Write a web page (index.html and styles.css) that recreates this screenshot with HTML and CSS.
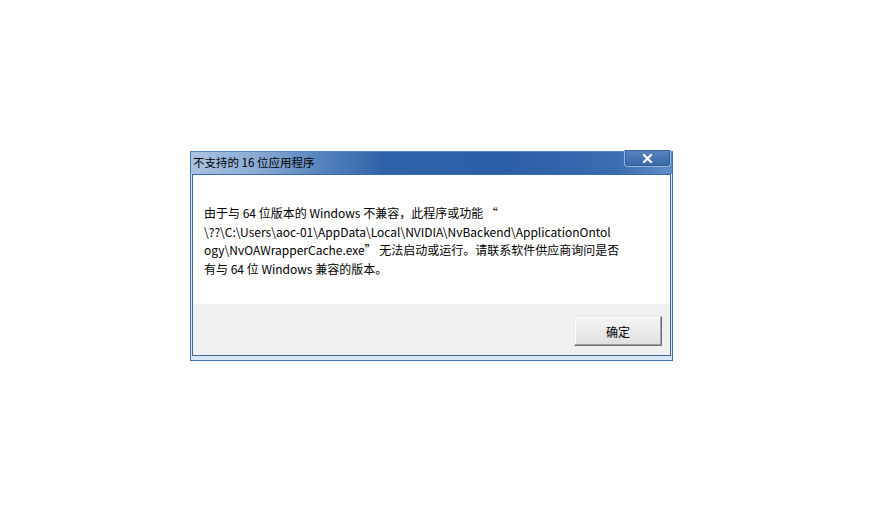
FILE: index.html
```html
<!DOCTYPE html>
<html lang="zh-CN">
<head>
<meta charset="utf-8">
<title>不支持的 16 位应用程序</title>
<link rel="stylesheet" href="styles.css">
</head>
<body>
<div class="window">
  <div class="titlebar">
    <span class="title">不支持的 16 位应用程序</span>
    <div class="close"><svg width="11" height="9" viewBox="0 0 11 9"><path d="M2 1 L9 8 M9 1 L2 8" stroke="#fff" stroke-width="2.2" stroke-linecap="square"/></svg></div>
  </div>
  <div class="client">
    <div class="message">
      <p>由于与 64 位版本的 Windows 不兼容，此程序或功能 “<br>\??\C:\Users\aoc-01\AppData\Local\NVIDIA\NvBackend\ApplicationOntol<br>ogy\NvOAWrapperCache.exe” 无法启动或运行。请联系软件供应商询问是否<br>有与 64 位 Windows 兼容的版本。</p>
    </div>
    <div class="footer">
      <button class="btn">确定</button>
    </div>
  </div>
</div>
</body>
</html>
```
FILE: styles.css
```css
html, body {
  margin: 0;
  padding: 0;
  background: #ffffff;
}
body {
  font-family: "Noto Sans CJK SC", "Noto Sans", sans-serif;
  width: 891px;
  height: 527px;
  overflow: hidden;
}
.window {
  position: relative;
  margin: 151px 0 0 190px;
  width: 483px;
  box-sizing: border-box;
  border: 1px solid #3f76b2;
  border-top-color: #5a86bd;
  background:
    linear-gradient(90deg, #a9c3e2 0%, #8aaad3 14%, #5a86c0 26%, #2f63a9 40%, #2a5ea6 65%, #3a6cb0 88%, #5f8cc6 100%) top left / 100% 22px no-repeat,
    #d9e6f3;
  padding: 0 1px 4px 1px;
}
.titlebar {
  height: 22px;
  display: flex;
  align-items: center;
  padding-left: 1px;
}
.title {
  font-size: 11.5px;
  color: #000;
  line-height: 14px;
  margin-top: -2px;
}
.close {
  position: absolute;
  right: 1px;
  top: -2px;
  width: 47px;
  height: 17px;
  box-sizing: border-box;
  border: 1px solid #9ab6d8;
  border-top: none;
  border-radius: 0 0 4px 4px;
  background: linear-gradient(180deg, #5c86bf 0%, #4775b3 50%, #3a69aa 100%);
  box-shadow: inset 0 0 0 1px rgba(40,80,140,0.6);
  display: flex;
  align-items: center;
  justify-content: center;
}
.close svg {
  display: block;
  margin-top: 0;
}
.client {
  border: 1px solid #3c6a9f;
  background: #ffffff;
}
.message {
  height: 129px;
  padding: 29px 0 0 11px;
  box-sizing: border-box;
}
.message p {
  margin: 0;
  font-size: 12px;
  line-height: 18.5px;
  color: #000;
  white-space: nowrap;
}
.footer {
  height: 51px;
  background: #f0f0f0;
  display: flex;
  justify-content: flex-end;
  align-items: flex-start;
  padding: 12px 8px 0 0;
  box-sizing: border-box;
}
.btn {
  width: 88px;
  height: 30px;
  font-family: "Noto Sans CJK SC", sans-serif;
  font-size: 12px;
  color: #000;
  background: linear-gradient(180deg, #f6f6f6 0%, #ebebeb 50%, #dedede 100%);
  border: 1px solid;
  border-color: #e8e8e8 #707070 #707070 #e8e8e8;
  box-shadow: inset -1px -1px 0 #a0a0a0, inset 1px 1px 0 #ffffff;
  border-radius: 0;
  padding: 0;
}
```
